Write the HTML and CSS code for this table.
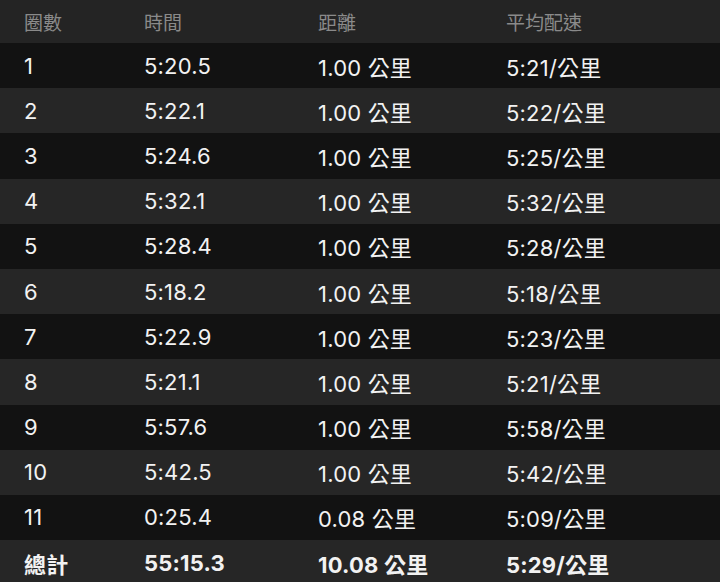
FILE: index.html
```html
<!DOCTYPE html>
<html lang="zh-Hant">
<head>
<meta charset="utf-8">
<link rel="stylesheet" href="styles.css">
</head>
<body>
<div class="table">
  <div class="row head"><span>圈數</span><span>時間</span><span>距離</span><span>平均配速</span></div>
  <div class="row odd"><span>1</span><span>5:20.5</span><span>1.00 公里</span><span>5:21/公里</span></div>
  <div class="row even"><span>2</span><span>5:22.1</span><span>1.00 公里</span><span>5:22/公里</span></div>
  <div class="row odd"><span>3</span><span>5:24.6</span><span>1.00 公里</span><span>5:25/公里</span></div>
  <div class="row even"><span>4</span><span>5:32.1</span><span>1.00 公里</span><span>5:32/公里</span></div>
  <div class="row odd"><span>5</span><span>5:28.4</span><span>1.00 公里</span><span>5:28/公里</span></div>
  <div class="row even"><span>6</span><span>5:18.2</span><span>1.00 公里</span><span>5:18/公里</span></div>
  <div class="row odd"><span>7</span><span>5:22.9</span><span>1.00 公里</span><span>5:23/公里</span></div>
  <div class="row even"><span>8</span><span>5:21.1</span><span>1.00 公里</span><span>5:21/公里</span></div>
  <div class="row odd"><span>9</span><span>5:57.6</span><span>1.00 公里</span><span>5:58/公里</span></div>
  <div class="row even"><span>10</span><span>5:42.5</span><span>1.00 公里</span><span>5:42/公里</span></div>
  <div class="row odd"><span>11</span><span>0:25.4</span><span>0.08 公里</span><span>5:09/公里</span></div>
  <div class="row even total"><span>總計</span><span>55:15.3</span><span>10.08 公里</span><span>5:29/公里</span></div>
</div>
</body>
</html>
```
FILE: styles.css
```css
html, body {
  margin: 0;
  padding: 0;
  background: #252525;
}
body {
  width: 720px;
  height: 582px;
  overflow: hidden;
  font-family: Inter, "Noto Sans CJK TC", sans-serif;
  color: #f2f2f2;
}
.table {
  display: flex;
  flex-direction: column;
}
.row {
  display: grid;
  grid-template-columns: 120px 174px 188px 1fr;
  align-items: center;
  padding-left: 24px;
  height: 45.2px;
  font-size: 22px;
  letter-spacing: 0.2px;
}
.head {
  height: 43px;
  background: #242424;
  color: #8a8a8a;
  font-size: 19px;
  letter-spacing: 0;
}
.odd {
  background: #121212;
}
.even {
  background: #262626;
}
.total {
  font-weight: 700;
}
```
